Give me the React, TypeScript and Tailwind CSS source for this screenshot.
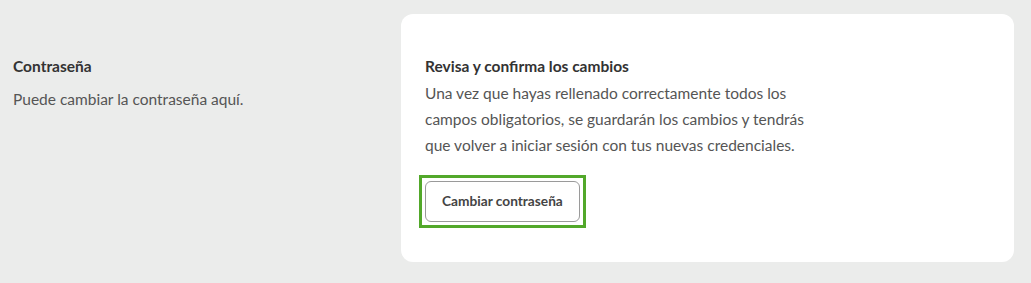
export default function App() {
  return (
    <div
      className="min-h-[283px] bg-[#ebeceb] pt-[14px] pb-[21px] pl-[13px] pr-[17px] flex"
      style={{ fontFamily: 'Lato, "Noto Sans", sans-serif' }}
    >
      <div className="w-[388px] shrink-0 pt-[42px]">
        <h3 className="text-[15.5px] font-bold text-[#333] leading-[20px]">Contraseña</h3>
        <p className="mt-[13px] text-[15.5px] text-[#555] leading-[20px]">Puede cambiar la contraseña aquí.</p>
      </div>
      <div className="flex-1 bg-white rounded-[12px] pl-[24px] pr-6 pt-[42px] pb-[34px]">
        <h4 className="text-[15.5px] font-bold text-[#333] leading-[20px]">Revisa y confirma los cambios</h4>
        <p className="mt-[4px] max-w-[385px] text-[15.5px] text-[#555] leading-[26px]">
          Una vez que hayas rellenado correctamente todos los campos obligatorios, se guardarán los cambios y tendrás
          que volver a iniciar sesión con tus nuevas credenciales.
        </p>
        <div className="mt-[17px] ml-[-6px] inline-block border-[3px] border-[#52a82a] p-[3px]">
          <button className="h-[41px] px-[16px] rounded-[6px] border border-[#9a9a9a] bg-white text-[13.7px] font-bold text-[#444]">
            Cambiar contraseña
          </button>
        </div>
      </div>
    </div>
  )
}
